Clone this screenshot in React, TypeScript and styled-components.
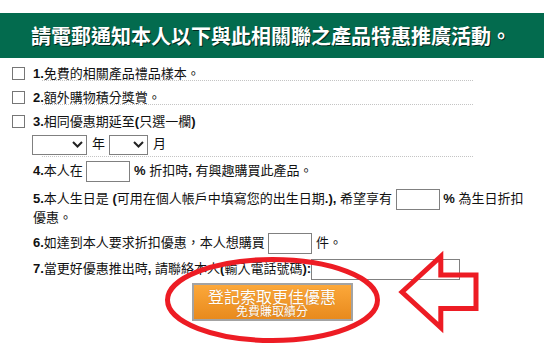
import React from "react";
import styled, { createGlobalStyle } from "styled-components";

const GlobalStyle = createGlobalStyle`
  html, body {
    margin: 0;
    padding: 0;
    background: #fff;
  }
  body {
    font-family: "Liberation Sans", "Noto Sans CJK TC", sans-serif;
    font-size: 13px;
    color: #111;
  }
`;

const Page = styled.div`
  position: relative;
  width: 544px;
  height: 351px;
  overflow: hidden;
  padding-top: 13px;
  box-sizing: border-box;
`;

const Header = styled.h1`
  margin: 0;
  height: 45px;
  line-height: 45px;
  padding-left: 31px;
  background: #036b4e;
  color: #fff;
  font-family: "Noto Sans CJK TC", sans-serif;
  font-size: 20px;
  font-weight: bold;
  text-shadow: 1px 1px 0 rgba(0, 0, 0, 0.65);
  white-space: nowrap;
`;

const CheckRow = styled.label<{ $top: number }>`
  display: flex;
  align-items: center;
  gap: 8px;
  height: 16px;
  margin-top: ${(p) => p.$top}px;
  padding-left: 12px;
`;

const Box = styled.input`
  appearance: none;
  width: 13px;
  height: 13px;
  margin: 2px 0 0;
  border: 1px solid #767676;
  background: #fff;
  box-sizing: border-box;
`;

const Divider = styled.div<{ $top?: number }>`
  margin: ${(p) => p.$top ?? 0}px 0 0 42px;
  width: 431px;
  border-top: 1px dotted #c4c4c4;
`;

const B = styled.b`
  font-family: "Liberation Sans", sans-serif;
  font-weight: bold;
`;

const Line = styled.div<{ $top: number; $indent?: number }>`
  height: 20px;
  line-height: 20px;
  margin-top: ${(p) => p.$top}px;
  padding-left: ${(p) => p.$indent ?? 33}px;
  white-space: nowrap;
`;

const Para = styled.p`
  margin: 8px 0 0;
  padding-left: 33px;
  width: 492px;
  line-height: 19px;
`;

const Field = styled.input<{ $w?: number }>`
  width: ${(p) => p.$w ?? 44}px;
  height: 21px;
  margin: -1px 0;
  padding: 0;
  border: 1px solid #808080;
  box-sizing: border-box;
  vertical-align: middle;
`;

const InlineField = styled(Field)`
  margin: -2px 0;
`;

const Dropdown = styled.span<{ $w: number }>`
  display: inline-flex;
  align-items: center;
  justify-content: flex-end;
  width: ${(p) => p.$w}px;
  height: 20px;
  padding-right: 3px;
  border: 1px solid #808080;
  box-sizing: border-box;
  vertical-align: middle;
`;

const Unit = styled.span`
  margin: 0 4px 0 5px;
`;

const Button = styled.button`
  display: flex;
  flex-direction: column;
  align-items: center;
  justify-content: center;
  width: 161px;
  height: 38px;
  margin: 4px auto 0;
  padding: 0;
  border: 2px solid #a3a3a3;
  background: linear-gradient(#fca83a, #e88a1d);
  color: #fff;
  font-family: "Noto Sans CJK TC", sans-serif;
  line-height: 1;
  text-shadow: 0 0 1px rgba(150, 80, 0, 0.5);
`;

const ButtonTitle = styled.span`
  font-size: 16px;
`;

const ButtonSub = styled.span`
  margin-top: 1px;
  font-size: 12px;
`;

const Markup = styled.svg`
  position: absolute;
  left: 0;
  top: 0;
  pointer-events: none;
`;

const Chevron = () => (
  <svg width="11" height="7" viewBox="0 0 11 7">
    <path d="M1 1l4.5 4.5L10 1" fill="none" stroke="#222" strokeWidth="2" />
  </svg>
);

export default function App() {
  return (
    <Page>
      <GlobalStyle />
      <Header>請電郵通知本人以下與此相關聯之產品特惠推廣活動。</Header>

      <CheckRow $top={6}>
        <Box type="checkbox" />
        <span>
          <B>1.</B>免費的相關產品禮品樣本。
        </span>
      </CheckRow>
      <Divider />
      <CheckRow $top={7}>
        <Box type="checkbox" />
        <span>
          <B>2.</B>額外購物積分獎賞。
        </span>
      </CheckRow>
      <Divider />
      <CheckRow $top={7}>
        <Box type="checkbox" />
        <span>
          <B>3.</B>相同優惠期延至<B>(</B>只選一欄<B>)</B>
        </span>
      </CheckRow>

      <Line $top={6} $indent={32}>
        <Dropdown $w={55}>
          <Chevron />
        </Dropdown>
        <Unit>年</Unit>
        <Dropdown $w={39}>
          <Chevron />
        </Dropdown>
        <Unit>月</Unit>
      </Line>
      <Divider $top={2} />

      <Line $top={4}>
        <B>4.</B>本人在 <Field /> <B>%</B> 折扣時<B>,</B> 有興趣購買此產品。
      </Line>

      <Para>
        <B>5.</B>本人生日是 <B>(</B>可用在個人帳戶中填寫您的出生日期<B>.),</B> 希望享有{" "}
        <InlineField /> <B>%</B> 為生日折扣優惠。
      </Para>

      <Line $top={6}>
        <B>6.</B>如達到本人要求折扣優惠，本人想購買 <Field /> 件。
      </Line>

      <Line $top={6}>
        <B>7.</B>當更好優惠推出時<B>,</B> 請聯絡本人<B>(</B>輸入電話號碼<B>):</B>
        <Field $w={149} />
      </Line>

      <Button type="button">
        <ButtonTitle>登記索取更佳優惠</ButtonTitle>
        <ButtonSub>免費賺取績分</ButtonSub>
      </Button>

      <Markup width="544" height="351" viewBox="0 0 544 351">
        <ellipse cx="272.5" cy="300" rx="105" ry="40.5" fill="none" stroke="#ed1c24" strokeWidth="5" />
        <polygon
          points="402,292 440.8,256.5 440.8,275 476,275 476,308.5 440.8,308.5 440.8,327.5"
          fill="none"
          stroke="#ed1c24"
          strokeWidth="5"
          strokeLinejoin="miter"
        />
      </Markup>
    </Page>
  );
}
